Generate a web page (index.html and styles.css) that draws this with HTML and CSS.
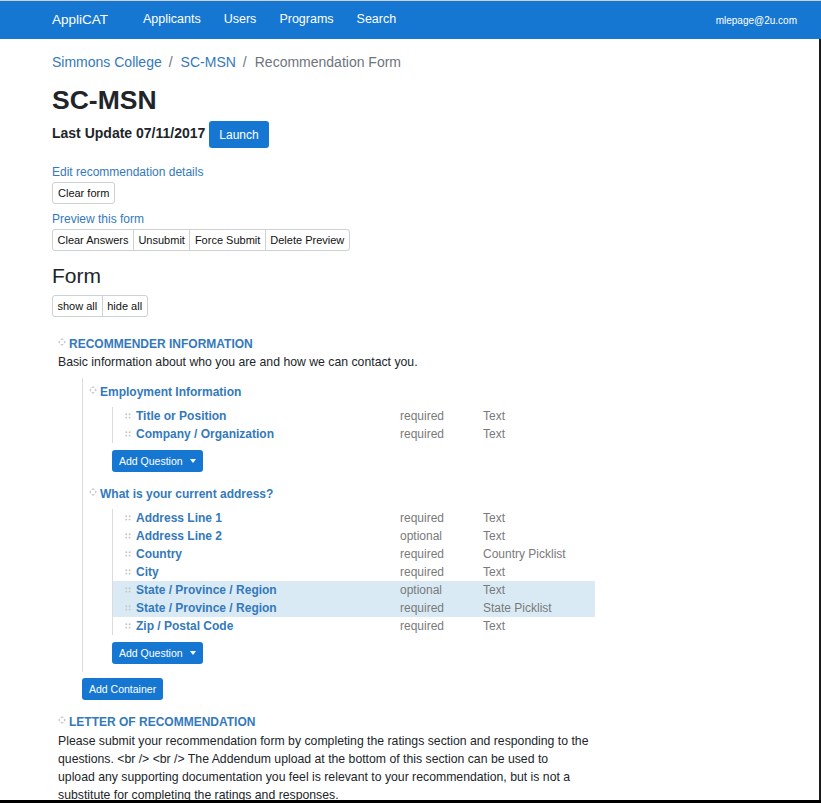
FILE: index.html
```html
<!DOCTYPE html>
<html lang="en">
<head>
<meta charset="utf-8">
<title>SC-MSN - Recommendation Form</title>
<link rel="stylesheet" href="styles.css">
</head>
<body>
<div class="topline"></div>
<header class="navbar">
  <span class="brand">AppliCAT</span>
  <nav class="nav">
    <a>Applicants</a>
    <a>Users</a>
    <a>Programs</a>
    <a>Search</a>
  </nav>
  <span class="user">mlepage@2u.com</span>
</header>

<main class="main">
  <div class="crumbs">
    <a class="link">Simmons College</a><span class="sep">/</span><a class="link">SC-MSN</a><span class="sep">/</span><span class="active">Recommendation Form</span>
  </div>
  <h1 class="title">SC-MSN</h1>
  <div class="update">
    <span class="update-text">Last Update 07/11/2017</span>
    <button class="btn-primary btn-launch">Launch</button>
  </div>

  <a class="link small-link first-link">Edit recommendation details</a>
  <div class="btn-row"><button class="btn-light rounded">Clear form</button></div>

  <a class="link small-link">Preview this form</a>
  <div class="btn-row">
    <div class="btn-group">
      <button class="btn-light">Clear Answers</button><button class="btn-light">Unsubmit</button><button class="btn-light">Force Submit</button><button class="btn-light">Delete Preview</button>
    </div>
  </div>

  <h2 class="form-title">Form</h2>
  <div class="btn-row tight">
    <div class="btn-group">
      <button class="btn-light">show all</button><button class="btn-light">hide all</button>
    </div>
  </div>

  <section class="section section-first">
    <div class="sec-title"><svg class="move" viewBox="0 0 10 10" width="8" height="8"><path d="M5 0 L7.3 2.6 H2.7 Z M5 10 L7.3 7.4 H2.7 Z M0 5 L2.6 2.7 V7.3 Z M10 5 L7.4 2.7 V7.3 Z"/></svg>RECOMMENDER INFORMATION</div>
    <p class="desc">Basic information about who you are and how we can contact you.</p>

    <div class="container">
      <div class="group-title"><svg class="move" viewBox="0 0 10 10" width="8" height="8"><path d="M5 0 L7.3 2.6 H2.7 Z M5 10 L7.3 7.4 H2.7 Z M0 5 L2.6 2.7 V7.3 Z M10 5 L7.4 2.7 V7.3 Z"/></svg>Employment Information</div>
      <div class="qlist">
        <div class="q"><span class="qlabel"><svg class="grip" viewBox="0 0 6 6" width="6" height="6"><circle cx="1.3" cy="1.3" r="0.95"/><circle cx="4.6" cy="1.3" r="0.95"/><circle cx="1.3" cy="4.6" r="0.95"/><circle cx="4.6" cy="4.6" r="0.95"/></svg>Title or Position</span><span class="meta">required</span><span class="meta">Text</span></div>
        <div class="q"><span class="qlabel"><svg class="grip" viewBox="0 0 6 6" width="6" height="6"><circle cx="1.3" cy="1.3" r="0.95"/><circle cx="4.6" cy="1.3" r="0.95"/><circle cx="1.3" cy="4.6" r="0.95"/><circle cx="4.6" cy="4.6" r="0.95"/></svg>Company / Organization</span><span class="meta">required</span><span class="meta">Text</span></div>
      </div>
      <button class="btn-primary btn-sm add-q">Add Question<span class="caret"></span></button>

      <div class="group-title second"><svg class="move" viewBox="0 0 10 10" width="8" height="8"><path d="M5 0 L7.3 2.6 H2.7 Z M5 10 L7.3 7.4 H2.7 Z M0 5 L2.6 2.7 V7.3 Z M10 5 L7.4 2.7 V7.3 Z"/></svg>What is your current address?</div>
      <div class="qlist">
        <div class="q"><span class="qlabel"><svg class="grip" viewBox="0 0 6 6" width="6" height="6"><circle cx="1.3" cy="1.3" r="0.95"/><circle cx="4.6" cy="1.3" r="0.95"/><circle cx="1.3" cy="4.6" r="0.95"/><circle cx="4.6" cy="4.6" r="0.95"/></svg>Address Line 1</span><span class="meta">required</span><span class="meta">Text</span></div>
        <div class="q"><span class="qlabel"><svg class="grip" viewBox="0 0 6 6" width="6" height="6"><circle cx="1.3" cy="1.3" r="0.95"/><circle cx="4.6" cy="1.3" r="0.95"/><circle cx="1.3" cy="4.6" r="0.95"/><circle cx="4.6" cy="4.6" r="0.95"/></svg>Address Line 2</span><span class="meta">optional</span><span class="meta">Text</span></div>
        <div class="q"><span class="qlabel"><svg class="grip" viewBox="0 0 6 6" width="6" height="6"><circle cx="1.3" cy="1.3" r="0.95"/><circle cx="4.6" cy="1.3" r="0.95"/><circle cx="1.3" cy="4.6" r="0.95"/><circle cx="4.6" cy="4.6" r="0.95"/></svg>Country</span><span class="meta">required</span><span class="meta">Country Picklist</span></div>
        <div class="q"><span class="qlabel"><svg class="grip" viewBox="0 0 6 6" width="6" height="6"><circle cx="1.3" cy="1.3" r="0.95"/><circle cx="4.6" cy="1.3" r="0.95"/><circle cx="1.3" cy="4.6" r="0.95"/><circle cx="4.6" cy="4.6" r="0.95"/></svg>City</span><span class="meta">required</span><span class="meta">Text</span></div>
        <div class="q hl"><span class="qlabel"><svg class="grip" viewBox="0 0 6 6" width="6" height="6"><circle cx="1.3" cy="1.3" r="0.95"/><circle cx="4.6" cy="1.3" r="0.95"/><circle cx="1.3" cy="4.6" r="0.95"/><circle cx="4.6" cy="4.6" r="0.95"/></svg>State / Province / Region</span><span class="meta">optional</span><span class="meta">Text</span></div>
        <div class="q hl"><span class="qlabel"><svg class="grip" viewBox="0 0 6 6" width="6" height="6"><circle cx="1.3" cy="1.3" r="0.95"/><circle cx="4.6" cy="1.3" r="0.95"/><circle cx="1.3" cy="4.6" r="0.95"/><circle cx="4.6" cy="4.6" r="0.95"/></svg>State / Province / Region</span><span class="meta">required</span><span class="meta">State Picklist</span></div>
        <div class="q"><span class="qlabel"><svg class="grip" viewBox="0 0 6 6" width="6" height="6"><circle cx="1.3" cy="1.3" r="0.95"/><circle cx="4.6" cy="1.3" r="0.95"/><circle cx="1.3" cy="4.6" r="0.95"/><circle cx="4.6" cy="4.6" r="0.95"/></svg>Zip / Postal Code</span><span class="meta">required</span><span class="meta">Text</span></div>
      </div>
      <button class="btn-primary btn-sm add-q">Add Question<span class="caret"></span></button>
    </div>
    <button class="btn-primary btn-sm add-c">Add Container</button>
  </section>

  <section class="section section-next">
    <div class="sec-title"><svg class="move" viewBox="0 0 10 10" width="8" height="8"><path d="M5 0 L7.3 2.6 H2.7 Z M5 10 L7.3 7.4 H2.7 Z M0 5 L2.6 2.7 V7.3 Z M10 5 L7.4 2.7 V7.3 Z"/></svg>LETTER OF RECOMMENDATION</div>
    <p class="desc long">Please submit your recommendation form by completing the ratings section and responding to the questions. &lt;br /&gt; &lt;br /&gt; The Addendum upload at the bottom of this section can be used to upload&nbsp;any supporting documentation you feel is relevant to your recommendation, but is not a substitute for completing the ratings and responses.</p>
  </section>
</main>

<div class="frame-right"></div>
<div class="frame-bottom"></div>
</body>
</html>
```

FILE: styles.css
```css
* { box-sizing: border-box; }

body {
  margin: 0;
  font-family: "Liberation Sans", Arial, sans-serif;
  color: #212529;
  background: #fff;
}

.topline { height: 1px; background: #cfcfcf; }

.navbar {
  height: 38px;
  background: #1677d3;
  color: #fff;
  display: flex;
  align-items: center;
  padding: 0 24px 2px 52px;
}
.brand { font-size: 13.5px; margin-right: 35px; }
.nav { display: flex; gap: 23px; font-size: 12.5px; flex: 1; }
.nav a { color: #fff; }
.user { font-size: 10px; margin-top: 2px; }

.main { padding: 0 0 40px 52px; }

.link { color: #3479bb; }
.crumbs { margin-top: 13px; font-size: 14px; line-height: 20px; }
.crumbs .sep { color: #6c757d; margin: 0 8px 0 7px; }
.crumbs .active { color: #6c757d; }

.title {
  margin: 11px 0 0;
  font-size: 26.5px;
  line-height: 34px;
  font-weight: bold;
}

.update { display: flex; align-items: center; gap: 4px; margin-top: 4px; }
.update-text { font-size: 14px; font-weight: bold; margin-top: -3px; }

button { font-family: inherit; cursor: pointer; }

.btn-primary {
  background: #1677d3;
  color: #fff;
  border: 0;
  border-radius: 3px;
}
.btn-launch { height: 27px; padding: 0 10px; font-size: 12px; }

.small-link { display: block; font-size: 12px; line-height: 16px; margin-top: 7px; }
.small-link.first-link { margin-top: 16px; }

.btn-row { display: flex; margin-top: 2px; }
.btn-row.tight { margin-top: 6px; }

.btn-light {
  height: 22px;
  padding: 0 5px;
  font-size: 11px;
  color: #111;
  background: #fff;
  border: 1px solid #cdd0d4;
}
.btn-light.rounded { border-radius: 3px; }
.btn-group { display: flex; }
.btn-group .btn-light { border-radius: 0; margin-left: -1px; padding: 0 4.5px; }
.btn-group .btn-light:first-child { margin-left: 0; border-radius: 3px 0 0 3px; }
.btn-group .btn-light:last-child { border-radius: 0 3px 3px 0; }

.form-title {
  margin: 12px 0 0;
  font-size: 21px;
  line-height: 26px;
  font-weight: normal;
}

.section { padding-left: 6px; }
.section-first { margin-top: 19px; }
.section-next { margin-top: 14px; }

.sec-title, .group-title {
  display: flex;
  align-items: center;
  gap: 3px;
  font-size: 12px;
  line-height: 16px;
  font-weight: bold;
  color: #3479bb;
}
.move { fill: #cbcbcb; margin-top: -5px; flex: none; }

.desc { margin: 1px 0 0; font-size: 12.25px; line-height: 18px; }
.desc.long { width: 532px; margin-top: 2px; }

.container {
  margin: 7px 0 0 24px;
  border-left: 1px solid #dcdcdc;
  padding: 6px 0 8px 6px;
}
.group-title.second { margin-top: 14px; }

.qlist {
  margin: 7px 0 0 23px;
  width: 483px;
  border-left: 1px solid #dcdcdc;
}
.q {
  display: grid;
  grid-template-columns: 287px 83px 1fr;
  height: 18px;
  align-items: center;
}
.q.hl { background: #d9eaf5; }
.qlabel {
  display: flex;
  align-items: center;
  gap: 5px;
  padding-left: 12px;
  font-size: 12px;
  font-weight: bold;
  color: #3479bb;
}
.grip { fill: #c4c4c4; flex: none; }
.meta { font-size: 12px; color: #7a7a7a; }

.btn-sm { height: 22px; padding: 0 7px; font-size: 10.5px; display: flex; align-items: center; }
.add-q { margin: 7px 0 0 23px; }
.caret {
  display: inline-block;
  margin-left: 7px;
  border-top: 4px solid #fff;
  border-left: 3.5px solid transparent;
  border-right: 3.5px solid transparent;
}
.add-c { margin: 6px 0 0 24px; }

.frame-right {
  position: fixed;
  top: 39px;
  right: 0;
  bottom: 0;
  width: 2px;
  background: #1a1a1a;
}
.frame-bottom {
  position: fixed;
  left: 0;
  right: 0;
  bottom: 0;
  height: 3px;
  background: #000;
}
```
